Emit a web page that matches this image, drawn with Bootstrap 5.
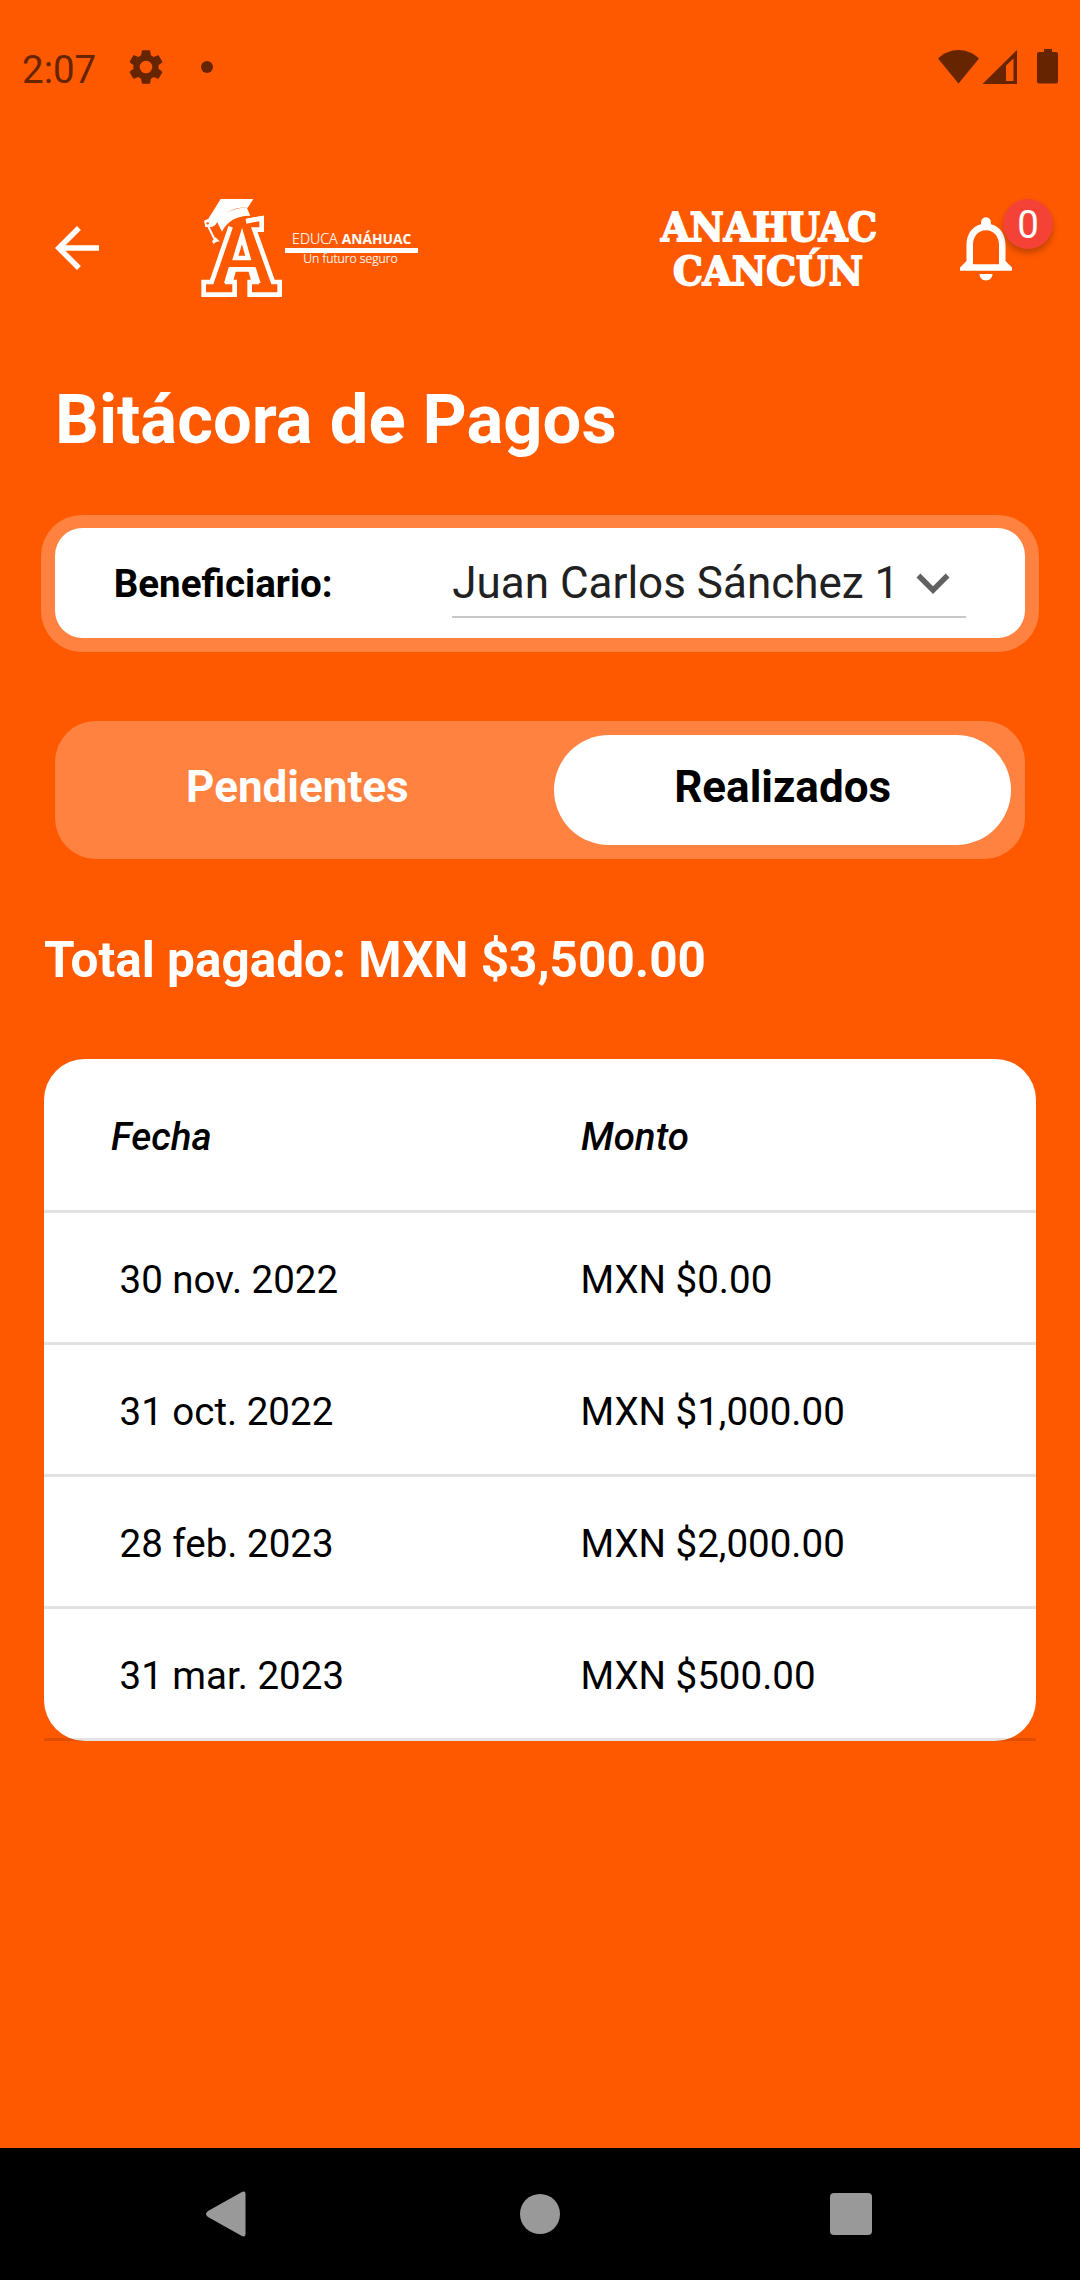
<!DOCTYPE html>
<html lang="es">
<head>
<meta charset="utf-8">
<meta name="viewport" content="width=device-width, initial-scale=1">
<title>Bitácora de Pagos</title>
<link href="https://cdn.jsdelivr.net/npm/bootstrap@5.3.0/dist/css/bootstrap.min.css" rel="stylesheet">
<style>
  body { background:#ff5900; font-family:Roboto,"Noto Sans",sans-serif; color:#000; }
  .screen { width:1080px; height:2280px; overflow:hidden; }
  .status-bar { height:132px; padding:2px 22px 0 22px; color:#662400; font-size:38.5px; line-height:1; }
  .clock { padding-top:6px; }
  .gear { margin-left:29px; }
  .more-dot { margin-left:34px; }
  .app-header { height:130px; margin-top:48px; }
  .back-btn { width:66px; height:66px; margin:5px 70px 0 44px; }
  .campus-mark { margin-left:180px; }
  .bell-wrap { width:78px; height:78px; margin:6px 0 0 47px; }
  .bell-count { top:-10px; left:56px; width:50px; height:50px; padding-top:3px; background:#f44336; font-size:38.5px; line-height:1; box-shadow:0 4px 6px rgba(0,0,0,.25); }
  .page-title { font-size:68.75px; line-height:80px; font-weight:700; margin:70px 55px 0; }
  .picker-frame { margin:54.5px 41px 0; height:137.5px; padding:13.75px; border-radius:41px; background:#ff8240; }
  .picker-body { border-radius:27.5px; padding:0 59px; }
  .picker-label { font-size:38.5px; font-weight:700; padding-top:2px; }
  .picker-value { width:514px; height:68px; margin-top:1px; font-size:44px; line-height:67px; color:#212121; border-bottom:2px solid #c8c8c8; }
  .tab-track { margin:69px 55px 0; height:137.5px; padding:13.75px; gap:28px; border-radius:41px; background:#ff8240; }
  .tab-track .nav-link { font-size:44px; font-weight:700; line-height:1; border-radius:55px; padding:0 0 6px; color:#fff; }
  .tab-track .nav-link.active { background:#fff; color:#000; }
  .total-line { font-size:49.5px; font-weight:700; line-height:58px; margin:72px 44px 0; }
  .pay-list { margin:70.5px 44px 0; border-radius:41px; font-size:38.5px; line-height:45px; }
  .pay-row { height:132px; padding:4px 0 0 75.500px; border-bottom:3px solid rgba(0,0,0,.115); }
  .pay-head { height:154px; padding-left:67px; font-weight:500; font-style:italic; }
  .date-col { width:461px; }
  .pay-head .date-col { width:470px; }
  .system-nav { height:132px; padding:0 208px 0 206px; }
</style>
</head>
<body>
<div class="screen d-flex flex-column">
  <div class="status-bar d-flex align-items-center justify-content-between">
    <div class="d-flex align-items-center">
      <span class="clock">2:07</span>
      <svg class="gear" width="42" height="42" viewBox="0 0 24 24" fill="#662400"><path d="M19.14 12.94c.04-.3.06-.61.06-.94 0-.32-.02-.64-.07-.94l2.03-1.58a.49.49 0 0 0 .12-.61l-1.92-3.32a.488.488 0 0 0-.59-.22l-2.39.96c-.5-.38-1.03-.7-1.62-.94l-.36-2.54a.484.484 0 0 0-.48-.41h-3.84c-.24 0-.43.17-.47.41l-.36 2.54c-.59.24-1.13.57-1.62.94l-2.39-.96c-.22-.08-.47 0-.59.22L2.74 8.87c-.12.21-.08.47.12.61l2.03 1.58c-.05.3-.09.63-.09.94s.02.64.07.94l-2.03 1.58a.49.49 0 0 0-.12.61l1.92 3.32c.12.22.37.29.59.22l2.39-.96c.5.38 1.03.7 1.62.94l.36 2.54c.05.24.24.41.48.41h3.84c.24 0 .44-.17.47-.41l.36-2.54c.59-.24 1.13-.56 1.62-.94l2.39.96c.22.08.47 0 .59-.22l1.92-3.32a.49.49 0 0 0-.12-.61l-2.01-1.58zM12 15.6A3.600 3.600 0 1 1 12 8.400a3.600 3.600 0 0 1 0 7.200z"/></svg>
      <svg class="more-dot" width="12" height="12" viewBox="0 0 12 12"><circle cx="6" cy="6" r="6" fill="#662400"/></svg>
    </div>
    <svg width="122" height="36" viewBox="0 0 122 36" fill="#662400"><path d="M2 9.500C14-2 31-2 43 9.500L22.500 34.500z"/><path fill-rule="evenodd" d="M81 1v34H46.500zM70 16.500V32h7.500V9.500z"/><path d="M108 0h8v3h4a2 2 0 0 1 2 2v27.500a2 2 0 0 1-2 2h-17a2 2 0 0 1-2-2V5a2 2 0 0 1 2-2h5z"/></svg>
  </div>

  <header class="app-header d-flex align-items-center">
    <a href="#" class="back-btn d-block flex-shrink-0"><svg class="d-block" width="66" height="66" viewBox="0 0 24 24" fill="#fff"><path d="M20 11H7.830l5.590-5.590L12 4l-8 8 8 8 1.410-1.410L7.830 13H20v-2z"/></svg></a>
    <svg class="flex-shrink-0" width="260" height="130" viewBox="0 0 780 390" fill="#fff">
      <path d="M122 57H220L203 83C165 80 128 98 106 135L96 141H76L72 122L85 116z"/>
      <path d="M109 121C130 99 165 84 200 82L211 107C170 106 140 125 126 155z"/>
      <path d="M84 138L104 178" stroke="#fff" stroke-width="6"/>
      <path d="M107 172L119 184L108 186L101 192L96 184z"/>
      <circle cx="83" cy="130" r="3.500" fill="#ff5900"/>
      <g fill="none" stroke="#fff" stroke-width="14">
        <path d="M152 140L95 306H71V344H164V306H144L156 268H216L228 306H209V344H299V306H279L223 149H245V115L198 124"/>
        <path d="M186 168L166 234H205z"/>
      </g>
      <path d="M146 262H171L158 309H132zM202 262H227L242 309H215zM198 116L252 107V120L212 124z"/>
      <path d="M315 204H714V219H315z"/>
      <text x="336" y="193" font-family="'Open Sans',sans-serif" font-size="42" font-weight="300" stroke="#fff" stroke-width=".6" textLength="137" lengthAdjust="spacingAndGlyphs">EDUCA</text>
      <text x="485" y="193" font-family="'Open Sans',sans-serif" font-size="42" font-weight="700" textLength="209" lengthAdjust="spacingAndGlyphs">ANÁHUAC</text>
      <text x="370" y="250" font-family="'Open Sans',sans-serif" font-size="36" font-weight="300" stroke="#fff" stroke-width=".6" textLength="283" lengthAdjust="spacingAndGlyphs">Un futuro seguro</text>
    </svg>
    <svg class="campus-mark flex-shrink-0 overflow-visible" width="280" height="130" viewBox="0 0 280 130" fill="#fff" stroke="#fff" stroke-width="1.800" font-family="'DejaVu Serif',serif" font-weight="700" font-size="39">
      <text x="41" y="60.500" textLength="216" lengthAdjust="spacingAndGlyphs">ANAHUAC</text>
      <text x="53" y="104.500" textLength="190" lengthAdjust="spacingAndGlyphs">CANCÚN</text>
    </svg>
    <div class="bell-wrap position-relative flex-shrink-0">
      <svg class="d-block" width="78" height="78" viewBox="0 0 24 24" fill="#fff"><path d="M12 22c1.100 0 2-.9 2-2h-4c0 1.100.9 2 2 2zm6-6v-5c0-3.070-1.630-5.640-4.500-6.320V4c0-.83-.67-1.500-1.500-1.500s-1.500.67-1.500 1.500v.68C7.640 5.360 6 7.920 6 11v5l-2 2v1h16v-1l-2-2zm-2 1H8v-6c0-2.480 1.510-4.500 4-4.500s4 2.020 4 4.500v6z"/></svg>
      <span class="bell-count position-absolute rounded-circle d-flex align-items-center justify-content-center text-white">0</span>
    </div>
  </header>

  <h1 class="page-title text-white">Bitácora de Pagos</h1>

  <section class="picker-frame d-flex">
    <div class="picker-body bg-white flex-fill d-flex align-items-center justify-content-between">
      <span class="picker-label">Beneficiario:</span>
      <div class="picker-value d-flex justify-content-between">
        <span class="text-nowrap">Juan Carlos Sánchez 1</span>
        <svg class="flex-shrink-0" width="66" height="66" viewBox="0 0 24 24" fill="#616161"><path d="M7.410 8.590L12 13.170l4.590-4.580L18 10l-6 6-6-6z"/></svg>
      </div>
    </div>
  </section>

  <nav class="tab-track nav nav-fill flex-nowrap">
    <a href="#" class="nav-link flex-fill w-50 d-flex align-items-center justify-content-center">Pendientes</a>
    <a href="#" class="nav-link active flex-fill w-50 d-flex align-items-center justify-content-center">Realizados</a>
  </nav>

  <p class="total-line text-white">Total pagado: MXN $3,500.00</p>

  <section class="pay-list bg-white">
    <div class="pay-row pay-head d-flex align-items-center"><span class="date-col">Fecha</span><span>Monto</span></div>
    <div class="pay-row d-flex align-items-center"><span class="date-col">30 nov. 2022</span><span>MXN $0.00</span></div>
    <div class="pay-row d-flex align-items-center"><span class="date-col">31 oct. 2022</span><span>MXN $1,000.00</span></div>
    <div class="pay-row d-flex align-items-center"><span class="date-col">28 feb. 2023</span><span>MXN $2,000.00</span></div>
    <div class="pay-row d-flex align-items-center"><span class="date-col">31 mar. 2023</span><span>MXN $500.00</span></div>
  </section>

  <footer class="system-nav bg-black mt-auto d-flex align-items-center justify-content-between">
    <svg width="40" height="46" viewBox="0 0 40 46" fill="#999"><path d="M35 1.500Q39.500-1 39.500 3V43Q39.500 47 35 44.500L2 26Q-2 23 2 20z"/></svg>
    <svg class="ms-1" width="40" height="40" viewBox="0 0 40 40"><circle cx="20" cy="20" r="20" fill="#999"/></svg>
    <svg width="42" height="42" viewBox="0 0 42 42"><rect width="42" height="42" rx="4" fill="#999"/></svg>
  </footer>
</div>
<script src="https://cdn.jsdelivr.net/npm/bootstrap@5.3.0/dist/js/bootstrap.bundle.min.js"></script>
</body>
</html>
